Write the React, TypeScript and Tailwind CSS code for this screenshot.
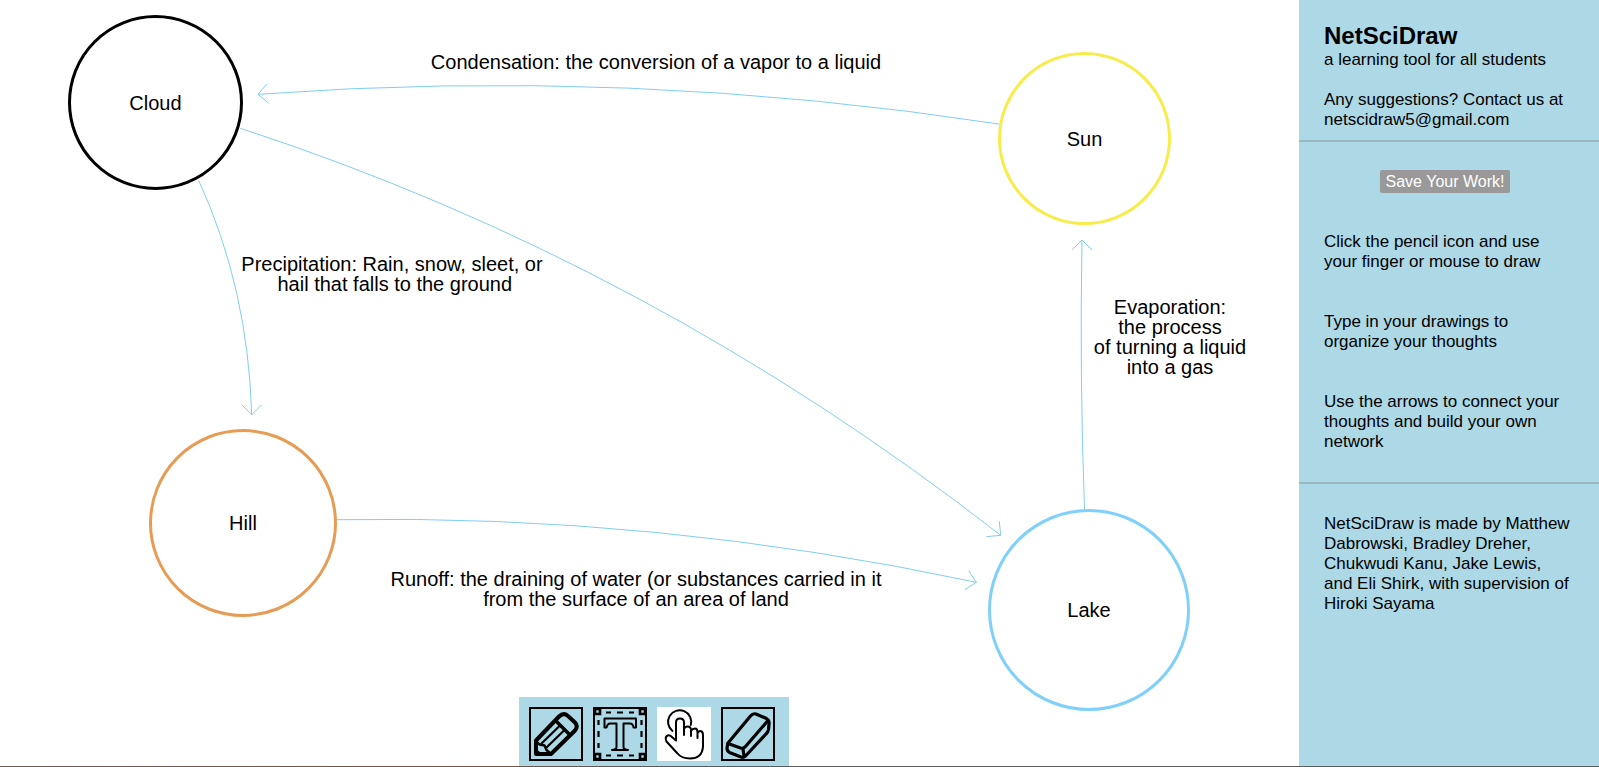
import React from 'react';

type CanvasNode = { name: string; box: string };
type CanvasNote = { lines: string[]; box: string };
type Connection = { id: string; curve: string; head: string };
type Tool = { name: string; look: string; icon: React.ReactNode };

const nodes: CanvasNode[] = [
  { name: 'Cloud', box: 'left-[68px] top-[15px] size-[175px] border-black' },
  { name: 'Sun', box: 'left-[998px] top-[52px] size-[173px] border-[#f8ec4a]' },
  { name: 'Hill', box: 'left-[149px] top-[429px] size-[188px] border-[#e69c54]' },
  { name: 'Lake', box: 'left-[988px] top-[509px] size-[202px] border-[#7fd0fb]' },
];

const notes: CanvasNote[] = [
  { lines: ['Condensation: the conversion of a vapor to a liquid'], box: 'left-[656px] top-[52px]' },
  { lines: ['Precipitation: Rain, snow, sleet, or', ' hail that falls to the ground'], box: 'left-[392px] top-[254px]' },
  { lines: ['Evaporation:', 'the process', 'of turning a liquid', 'into a gas'], box: 'left-[1170px] top-[297px]' },
  {
    lines: ['Runoff: the draining of water (or substances carried in it', 'from the surface of an area of land'],
    box: 'left-[636px] top-[569px]',
  },
];

const connections: Connection[] = [
  { id: 'sun-cloud', curve: 'M1000 124.2Q628 67 258 94.3', head: 'M267.3 83.7L258 94.3L268.7 103.3' },
  { id: 'cloud-lake', curve: 'M240.4 128.3Q650 262 1000.7 535.3', head: 'M999.3 521.3L1000.7 535.3L986.3 536.7' },
  { id: 'cloud-hill', curve: 'M198.8 180.7Q248 288 251.7 414.7', head: 'M241.7 404.7L251.7 414.7L261.7 404.7' },
  { id: 'hill-lake', curve: 'M336 519.7Q657 514 976.3 582.3', head: 'M968.7 570.7L976.3 582.3L964.7 589.7' },
  { id: 'lake-sun', curve: 'M1084.5 510Q1079.5 375 1082 240', head: 'M1072.3 249.7L1082 240L1092 250' },
];

const PencilIcon = () => (
  <svg viewBox="2 2 50 50" className="size-full" fill="none" stroke="#000" strokeLinejoin="round" strokeLinecap="round">
    <path strokeWidth="4" d="M7 33.5L30 9.5Q34.5 5 39 9L46 15.5Q49.5 19 46 23.5L22 47L7 47Z" />
    <path strokeWidth="3.4" d="M26.5 13.5L40.5 27.5" />
    <path strokeWidth="2.4" d="M7 34L10.5 37.5L15.5 38.5L17.5 43L22 47" />
    <path strokeWidth="2.2" d="M12.5 36.5L31 18.5M17 41L35.5 23" />
    <path fill="#000" strokeWidth="1" d="M7 42L13 47.5H7Z" />
  </svg>
);

const TextIcon = () => (
  <svg viewBox="2 2 50 50" className="size-full" fill="none" stroke="#000">
    <path strokeWidth="2.2" d="M13 5.5H18M24 5.5H30M36 5.5H41M13 48.500H18M24 48.500H30M36 48.500H41M5.500 13V18M5.500 24V30M5.500 36V41M48.500 13V18M48.500 24V30M48.500 36V41" />
    <path strokeWidth="2.6" d="M2 2H7V7H2ZM47 2H52V7H47ZM2 47H7V52H2ZM47 47H52V52H47Z" />
    <path strokeWidth="2" strokeLinejoin="round" d="M11.500 11.500H43V20.500H40.500Q40 16.500 37 16.500H30.500V40Q30.500 42.500 35 43H19Q23.500 42.500 23.500 40V16.500H17Q14.500 16.500 13.500 20.500H11.500Z" />
  </svg>
);

const PointerIcon = () => (
  <svg viewBox="0 0 54 54" className="size-full" fill="none" stroke="#000" strokeWidth="2" strokeLinejoin="round" strokeLinecap="round">
    <path d="M15.500 24A11.600 11.600 0 1 1 33.800 18" />
    <path d="M19 33.500V15.500Q19 11.500 22.900 11.500Q27 11.500 27 15.500V28M27 22Q28 19.500 30.500 19.500Q34 19.500 34 23V29M34 24Q35.500 21.500 38 21.500Q40.500 21.500 40.500 25V31M40.500 26Q42 23.500 43.500 24Q46 24.500 46 28V40Q45 51.500 33 51.500Q24.500 51.500 20.500 46.500L9.500 34.500Q7.500 30 10.500 28.500Q13 27.500 15.500 30.500L19 33.500" />
  </svg>
);

const EraserIcon = () => (
  <svg viewBox="2 2 50 50" className="size-full" fill="none" stroke="#000" strokeWidth="3.2" strokeLinejoin="round" strokeLinecap="round">
    <path d="M7 36L29.500 9Q32 6 35 7L45.500 11.500Q48.500 13.500 48 17L47.500 22.500Q47 25 45 27L25 48.500Q23 51 20 50L8.500 45.500Q6 44 6 41Z" />
    <path d="M7 36.500L19.500 41Q22.500 42 24.500 39.500L47 13.500M22 42L23 49" />
  </svg>
);

const tools: Tool[] = [
  { name: 'Draw', look: 'border-2 border-black', icon: <PencilIcon /> },
  { name: 'Text', look: 'border-2 border-black', icon: <TextIcon /> },
  { name: 'Select', look: 'bg-white', icon: <PointerIcon /> },
  { name: 'Erase', look: 'border-2 border-black', icon: <EraserIcon /> },
];

const tips = [
  'Click the pencil icon and use your finger or mouse to draw',
  'Type in your drawings to organize your thoughts',
  'Use the arrows to connect your thoughts and build your own network',
];

function Canvas() {
  return (
    <main className="relative flex min-w-0 flex-1 flex-col items-center justify-end overflow-hidden text-xl leading-5">
      <svg className="absolute inset-0 size-full" fill="none" stroke="#80cef0" strokeWidth="1" aria-hidden="true">
        {connections.map((c) => (
          <g key={c.id}>
            <path d={c.curve} />
            <path d={c.head} />
          </g>
        ))}
      </svg>
      {nodes.map((n) => (
        <div key={n.name} className={`absolute flex items-center justify-center rounded-full border-3 ${n.box}`}>
          {n.name}
        </div>
      ))}
      {notes.map((n) => (
        <p key={n.lines[0]} className={`absolute -translate-x-1/2 text-center whitespace-pre ${n.box}`}>
          {n.lines.map((line) => (
            <span key={line} className="block">
              {line}
            </span>
          ))}
        </p>
      ))}
      <div role="toolbar" aria-label="Drawing tools" className="relative ml-[9px] flex gap-2.5 bg-[#add8e6] pt-2.5 pr-3.5 pb-[5px] pl-2.5">
        {tools.map((t) => (
          <button key={t.name} type="button" aria-label={t.name} className={`size-[54px] ${t.look}`}>
            {t.icon}
          </button>
        ))}
      </div>
    </main>
  );
}

function Sidebar() {
  return (
    <aside className="w-[300px] shrink-0 bg-[#add8e6] text-[17px] leading-5">
      <header className="border-b-2 border-[#9ab8c2] px-[25px] pt-6 pb-2.5">
        <h1 className="pb-0.5 text-2xl leading-6 font-bold">NetSciDraw</h1>
        <p>a learning tool for all students</p>
        <p className="mt-5">Any suggestions? Contact us at netscidraw5@gmail.com</p>
      </header>
      <section className="flex flex-col border-b-2 border-[#9ab8c2] px-[25px] pt-7 pb-[30px]">
        <button type="button" className="mr-2 self-center rounded-xs bg-[#999] px-1.5 py-px text-base leading-[21px] text-white">
          Save Your Work!
        </button>
        <div className="mt-[39px] flex flex-col gap-10">
          {tips.map((tip) => (
            <p key={tip}>{tip}</p>
          ))}
        </div>
      </section>
      <p className="px-[25px] pt-[30px]">
        NetSciDraw is made by Matthew Dabrowski, Bradley Dreher, Chukwudi Kanu, Jake Lewis, and Eli Shirk, with supervision of Hiroki Sayama
      </p>
    </aside>
  );
}

export default function App() {
  return (
    <div className="flex min-h-screen flex-col bg-white font-['Liberation_Sans',Arial,sans-serif] text-black">
      <div className="flex flex-1">
        <Canvas />
        <Sidebar />
      </div>
      <div className="h-px bg-linear-to-r from-[#6b5a4e] via-[#7a5040] via-35% to-[#5c5c5a] to-45%" />
    </div>
  );
}
